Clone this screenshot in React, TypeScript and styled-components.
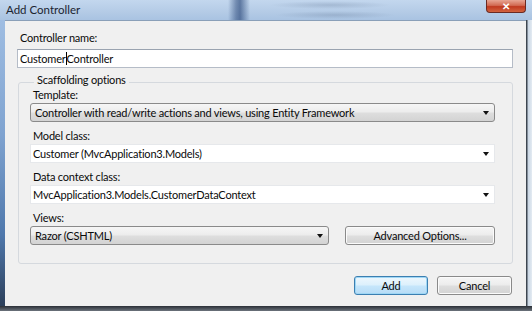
import React from "react";
import styled, { createGlobalStyle } from "styled-components";

const Global = createGlobalStyle`
  html, body { margin: 0; padding: 0; }
  body {
    width: 532px; height: 311px; overflow: hidden;
    background: #4a5460;
    font-family: Lato, "Open Sans", "Noto Sans", sans-serif;
  }
`;

const Window = styled.div`
  width: 532px;
  height: 311px;
  display: flex;
  flex-direction: column;
`;

const TitleBar = styled.div`
  height: 20px;
  flex: none;
  display: flex;
  align-items: flex-start;
  justify-content: space-between;
  background:
    linear-gradient(90deg, transparent 228px, rgba(40,70,120,0.5) 236px, rgba(40,70,120,0.65) 240px, transparent 250px),
    radial-gradient(ellipse 60px 4px at 330px 5px, rgba(90,110,140,0.25), transparent),
    radial-gradient(ellipse 60px 4px at 335px 15px, rgba(90,110,140,0.25), transparent),
    linear-gradient(180deg, #c3d7ee 0%, #b4cbe6 60%, #a9c3e2 100%);
`;

const Title = styled.div`
  font-size: 11.5px;
  line-height: 16px;
  color: #1b2430;
  padding: 2px 0 0 6px;
`;

const CloseButton = styled.div`
  width: 40px;
  height: 13px;
  margin-right: 6px;
  box-sizing: border-box;
  border: 1px solid #6b2a22;
  border-top: none;
  border-radius: 0 0 4px 4px;
  background: linear-gradient(180deg, #e8a593 0%, #d26a52 45%, #c0391f 55%, #d2633f 100%);
  display: flex;
  align-items: center;
  justify-content: center;
  color: #fff;
  font-size: 10px;
  font-weight: bold;
  line-height: 10px;
`;

const Middle = styled.div`
  flex: 1;
  display: flex;
`;

const LeftFrame = styled.div`
  width: 5px;
  background: linear-gradient(180deg, #9fbde2 0%, #7fa3d0 40%, #4f78ac 75%, #2c3f5a 100%);
`;

const RightFrame = styled.div`
  width: 6px;
  background: linear-gradient(90deg, #3d4650 0px, #3d4650 1px, #c9d6e4 2px, #e4ebf2 100%);
`;

const Bottom = styled.div`
  height: 5px;
  flex: none;
  background: linear-gradient(180deg, #2a2f36, #6c737c);
`;

const Content = styled.div`
  flex: 1;
  background: #f0f0f0;
  border-top: 1px solid #8a9fb8;
  box-sizing: border-box;
  padding: 9px 13px 0 12px;
  display: flex;
  flex-direction: column;
  color: #0a0a0a;
  font-size: 11px;
  letter-spacing: -0.2px;
`;

const Label = styled.div`
  line-height: 16px;
  height: 16px;
  padding-left: 3px;
`;

const TextBox = styled.div`
  margin-top: 3px;
  height: 19px;
  box-sizing: border-box;
  background: #fff;
  border: 1px solid #b5bcc7;
  border-top-color: #9aa3b0;
  padding-left: 2px;
  line-height: 17px;
  display: flex;
`;

const Caret = styled.span`
  display: inline-block;
  width: 1px;
  height: 13px;
  margin-top: 2px;
  background: #000;
`;

const Group = styled.fieldset`
  margin: 4px 0 0 1px;
  padding: 0 17px 18px 11px;
  border: 1px solid #d5d9de;
  border-radius: 3px;
  display: flex;
  flex-direction: column;
`;

const Legend = styled.legend`
  padding: 0 3px 5px 3px;
  margin-left: 4px;
  line-height: 16px;
`;

const Fields = styled.div`
  margin-top: -6px;
  display: flex;
  flex-direction: column;
  gap: 6px;
`;

const Field = styled.div`
  display: flex;
  flex-direction: column;
`;

const Arrow = styled.span`
  width: 0;
  height: 0;
  border-left: 3.5px solid transparent;
  border-right: 3.5px solid transparent;
  border-top: 4px solid #111;
  flex: none;
`;

const Combo = styled.div<{ $button?: boolean; $width?: number }>`
  height: 19px;
  box-sizing: border-box;
  display: flex;
  align-items: center;
  justify-content: space-between;
  width: ${(p) => (p.$width ? `${p.$width}px` : "auto")};
  padding: ${(p) => (p.$button ? "0 5px 0 4px" : "0 5px 0 2px")};
  border: 1px solid ${(p) => (p.$button ? "#8a8a8a" : "#e6e8eb")};
  border-radius: ${(p) => (p.$button ? "3px" : "0")};
  background: ${(p) =>
    p.$button
      ? "linear-gradient(180deg, #f6f6f6 0%, #ececec 48%, #dedede 52%, #d3d3d3 100%)"
      : "#fff"};
  white-space: nowrap;
`;

const Row = styled.div`
  display: flex;
  gap: 16px;
`;

const Button = styled.div<{ $default?: boolean; $width: number }>`
  width: ${(p) => p.$width}px;
  height: 19px;
  box-sizing: border-box;
  border-radius: 3px;
  display: flex;
  align-items: center;
  justify-content: center;
  border: 1px solid ${(p) => (p.$default ? "#3c7fb1" : "#8a8a8a")};
  background: ${(p) =>
    p.$default
      ? "linear-gradient(180deg, #eef7fd 0%, #dcf0fc 48%, #c6e6fb 52%, #b7dcf6 100%)"
      : "linear-gradient(180deg, #f6f6f6 0%, #ececec 48%, #dedede 52%, #d3d3d3 100%)"};
  box-shadow: ${(p) => (p.$default ? "inset 0 0 0 1px #9fd7f5" : "inset 0 0 0 1px #fbfbfb")};
`;

const Buttons = styled.div`
  margin-top: 12px;
  padding-right: 1px;
  display: flex;
  justify-content: flex-end;
  gap: 9px;
`;

export default function App() {
  return (
    <>
      <Global />
      <Window>
        <TitleBar>
          <Title>Add Controller</Title>
          <CloseButton>✕</CloseButton>
        </TitleBar>
        <Middle>
          <LeftFrame />
          <Content>
            <Label>Controller name:</Label>
            <TextBox>
              Customer<Caret />Controller
            </TextBox>
            <Group>
              <Legend>Scaffolding options</Legend>
              <Fields>
                <Field>
                  <Label>Template:</Label>
                  <Combo $button>
                    Controller with read/write actions and views, using Entity Framework
                    <Arrow />
                  </Combo>
                </Field>
                <Field>
                  <Label>Model class:</Label>
                  <Combo>
                    Customer (MvcApplication3.Models)
                    <Arrow />
                  </Combo>
                </Field>
                <Field>
                  <Label>Data context class:</Label>
                  <Combo>
                    MvcApplication3.Models.CustomerDataContext
                    <Arrow />
                  </Combo>
                </Field>
                <Field>
                  <Label>Views:</Label>
                  <Row>
                    <Combo $button $width={299}>
                      Razor (CSHTML)
                      <Arrow />
                    </Combo>
                    <Button $width={150}>Advanced Options...</Button>
                  </Row>
                </Field>
              </Fields>
            </Group>
            <Buttons>
              <Button $default $width={74}>Add</Button>
              <Button $width={75}>Cancel</Button>
            </Buttons>
          </Content>
          <RightFrame />
        </Middle>
        <Bottom />
      </Window>
    </>
  );
}
